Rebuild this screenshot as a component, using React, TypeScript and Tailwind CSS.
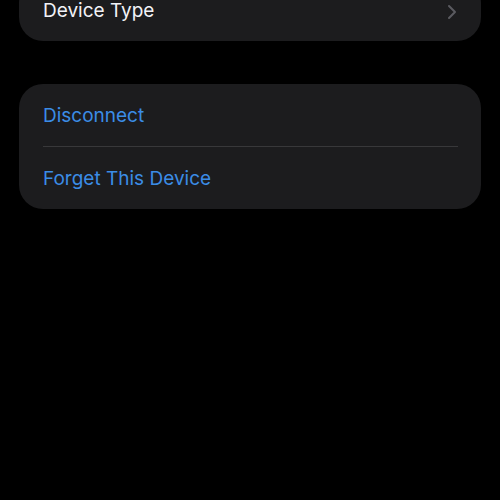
function Row({ label, tone }: { label: string; tone: "white" | "blue" }) {
  return (
    <div className="flex h-[62px] items-center pl-6 pr-[24px] pt-[3px]">
      <span
        className={
          tone === "blue"
            ? "text-[19px] text-[#3b8ce6]"
            : "text-[19px] text-[#f2f2f7]"
        }
      >
        {label}
      </span>
    </div>
  );
}

export default function App() {
  return (
    <div
      className="min-h-[500px] w-[500px] overflow-hidden bg-black px-[19px]"
      style={{ fontFamily: "Inter, 'Liberation Sans', sans-serif" }}
    >
      {/* card cut off at the top */}
      <div className="-mt-[21px] rounded-[24px] bg-[#1c1c1e]">
        <div className="flex h-[62px] items-center justify-between pl-6 pr-[24px] pt-[3px]">
          <span className="text-[19px] text-[#f2f2f7]">Device Type</span>
          <svg width="10" height="16" viewBox="0 0 10 16" fill="none">
            <path
              d="M2 2l6 6-6 6"
              stroke="#5b5b60"
              strokeWidth="2"
              strokeLinecap="round"
              strokeLinejoin="round"
            />
          </svg>
        </div>
      </div>

      <div className="mt-[43px] rounded-[24px] bg-[#1c1c1e]">
        <Row label="Disconnect" tone="blue" />
        <div className="ml-6 mr-[23px] h-px bg-[#38383a]" />
        <Row label="Forget This Device" tone="blue" />
      </div>
    </div>
  );
}
